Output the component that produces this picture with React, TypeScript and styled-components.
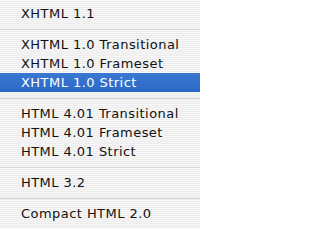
import React from 'react';
import styled, { createGlobalStyle } from 'styled-components';

const GlobalStyle = createGlobalStyle`
  html, body {
    margin: 0;
    padding: 0;
  }
  body {
    font-family: "DejaVu Sans", Verdana, sans-serif;
  }
`;

// Pinstriped Aqua-style menu panel
const Menu = styled.div`
  width: 200px;
  height: 228px;
  box-sizing: border-box;
  padding-top: 4px;
  display: flex;
  flex-direction: column;
  background: repeating-linear-gradient(
    to bottom,
    #f7f7f7 0px,
    #f7f7f7 1px,
    #ececec 1px,
    #ececec 2px
  );
  overflow: hidden;
`;

const Item = styled.div<{ $selected?: boolean }>`
  height: 19px;
  line-height: 19px;
  padding-left: 21px;
  font-size: 13px;
  letter-spacing: 0.45px;
  white-space: nowrap;
  color: ${(p) => (p.$selected ? '#ffffff' : '#111111')};
  background: ${(p) =>
    p.$selected ? 'linear-gradient(to bottom, #3b78d2, #2c69c5)' : 'transparent'};
`;

const Separator = styled.div`
  height: 12px;
  display: flex;
  align-items: center;

  &::after {
    content: '';
    display: block;
    width: 100%;
    height: 1px;
    background: #d6d6d6;
  }
`;

type Entry = { label: string; selected?: boolean } | 'sep';

const entries: Entry[] = [
  { label: 'XHTML 1.1' },
  'sep',
  { label: 'XHTML 1.0 Transitional' },
  { label: 'XHTML 1.0 Frameset' },
  { label: 'XHTML 1.0 Strict', selected: true },
  'sep',
  { label: 'HTML 4.01 Transitional' },
  { label: 'HTML 4.01 Frameset' },
  { label: 'HTML 4.01 Strict' },
  'sep',
  { label: 'HTML 3.2' },
  'sep',
  { label: 'Compact HTML 2.0' },
];

const App: React.FC = () => (
  <>
    <GlobalStyle />
    <Menu>
      {entries.map((entry, index) =>
        entry === 'sep' ? (
          <Separator key={index} />
        ) : (
          <Item key={index} $selected={entry.selected}>
            {entry.label}
          </Item>
        )
      )}
    </Menu>
  </>
);

export default App;
